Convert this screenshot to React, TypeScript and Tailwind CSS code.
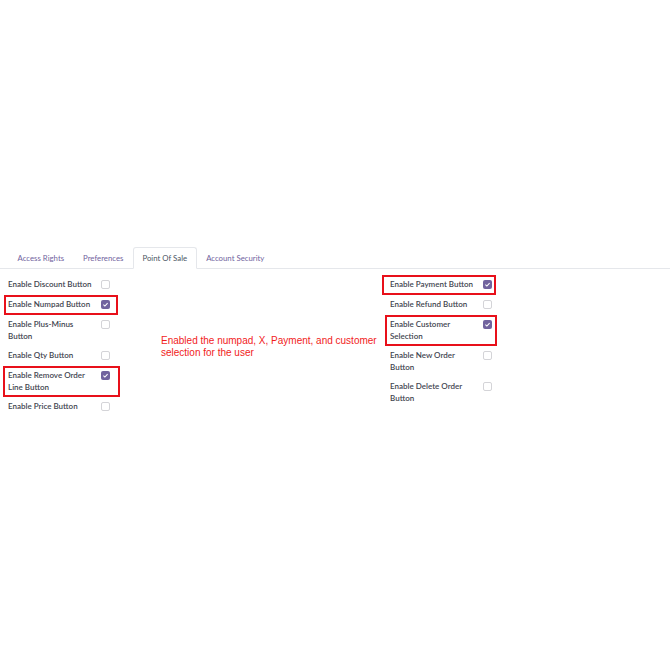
import * as React from 'react';

type Row = {label: string; checked?: boolean; box?: string};

const leftRows: Row[] = [
  {label: 'Enable Discount Button'},
  {label: 'Enable Numpad Button', checked: true, box: '-left-[4px] w-[114px]'},
  {label: 'Enable Plus-Minus Button'},
  {label: 'Enable Qty Button'},
  {label: 'Enable Remove Order Line Button', checked: true, box: '-left-[5px] w-[117px]'},
  {label: 'Enable Price Button'},
];

const rightRows: Row[] = [
  {label: 'Enable Payment Button', checked: true, box: '-left-[8px] w-[114px]'},
  {label: 'Enable Refund Button'},
  {label: 'Enable Customer Selection', checked: true, box: '-left-[5px] w-[112px]'},
  {label: 'Enable New Order Button'},
  {label: 'Enable Delete Order Button'},
];

const tabs = ['Access Rights', 'Preferences', 'Point Of Sale', 'Account Security'];

function Checkbox({checked}: {checked?: boolean}) {
  if (checked) {
    return (
      <span className="mt-[1px] flex h-[9px] w-[9px] items-center justify-center rounded-[2px] bg-[#71639e]">
        <svg viewBox="0 0 10 10" className="h-[7px] w-[7px]">
          <path d="M2 5.2 L4.1 7.2 L8 3" fill="none" stroke="white" strokeWidth="1.5" />
        </svg>
      </span>
    );
  }
  return <span className="mt-[1px] block h-[9px] w-[9px] rounded-[2px] border border-[#d4d4d8] bg-white" />;
}

function SettingRow({row}: {row: Row}) {
  return (
    <div className="relative grid min-h-[20px] grid-cols-[93px_auto] items-start py-1">
      <span className="pr-1 text-[8px] font-semibold leading-[11.5px] text-[#3f4550]">{row.label}</span>
      <Checkbox checked={row.checked} />
      {row.box && (
        <span className={'pointer-events-none absolute top-0 bottom-0 border-2 border-[#e8101a] ' + row.box} />
      )}
    </div>
  );
}

export default function App() {
  return (
    <div
      className="h-[670px] w-[670px] overflow-hidden bg-white pt-[247px]"
      style={{fontFamily: 'Lato, "Noto Sans", sans-serif'}}>
      <div className="flex border-b border-[#e5e7eb] pl-2">
        {tabs.map((t) => (
          <div
            key={t}
            className={
              t === 'Point Of Sale'
                ? '-mb-px h-[22px] rounded-t-[3px] border border-b-white border-[#e5e7eb] bg-white px-[8.5px] pt-[5px] text-[7.8px] text-[#4b5563]'
                : 'h-[21px] border border-transparent px-[8.5px] pt-[5px] text-[7.8px] text-[#71639e]'
            }>
            {t}
          </div>
        ))}
      </div>

      <div className="grid grid-cols-[161px_221px_1fr] pt-[6px]">
        <div className="pl-2">
          {leftRows.map((r) => (
            <SettingRow key={r.label} row={r} />
          ))}
        </div>
        <div className="pt-[60px]">
          <p
            className="text-[10px] leading-[11.5px] text-[#f11c1c]"
            style={{fontFamily: '"Liberation Sans", Arial, sans-serif'}}>
            Enabled the numpad, X, Payment, and customer selection for the user
          </p>
        </div>
        <div className="pl-2">
          {rightRows.map((r) => (
            <SettingRow key={r.label} row={r} />
          ))}
        </div>
      </div>
    </div>
  );
}
